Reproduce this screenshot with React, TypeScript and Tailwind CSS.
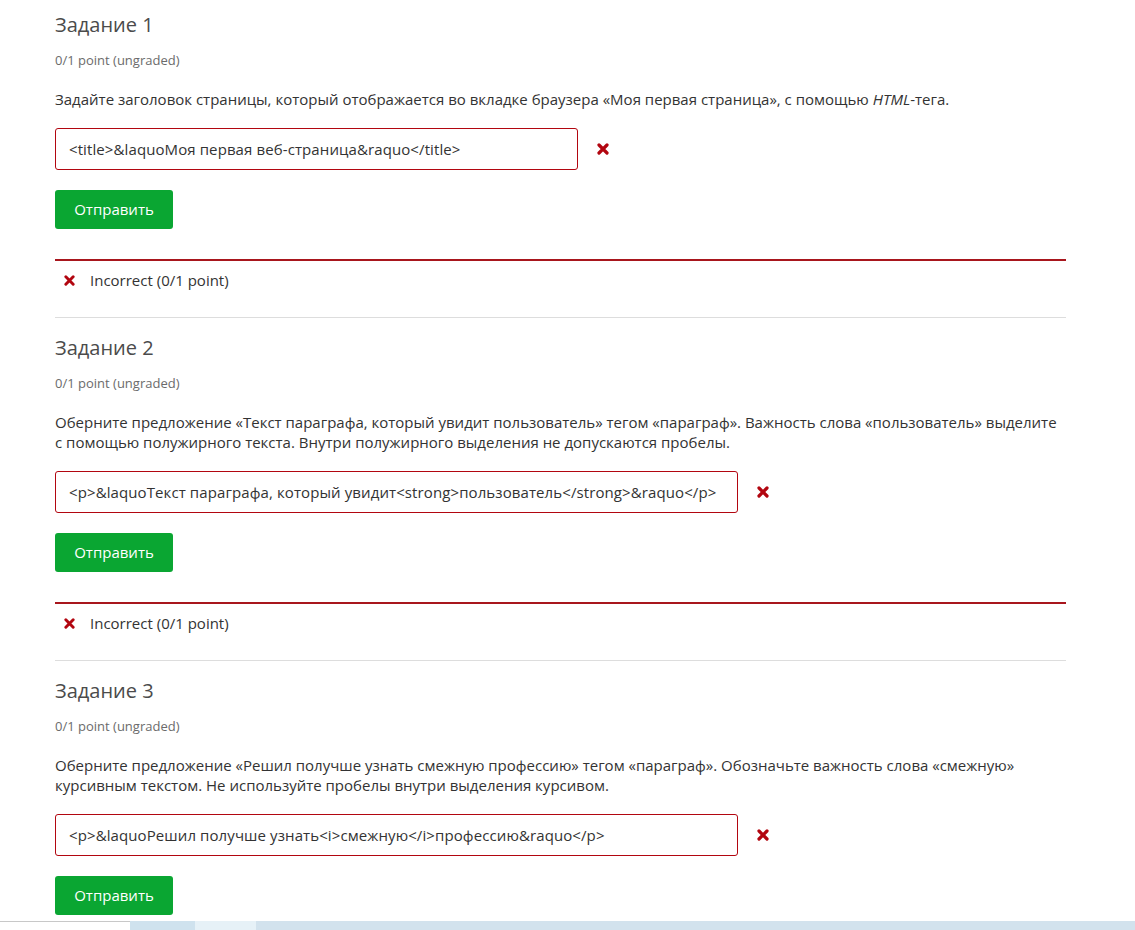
type Task = {
    title: string;
    text: React.ReactNode;
    answer: string;
    inputWidth: string;
};

const tasks: Task[] = [
    {
        title: 'Задание 1',
        text: (
            <>
                Задайте заголовок страницы, который отображается во вкладке браузера «Моя первая страница», с помощью <i>HTML</i>-тега.
            </>
        ),
        answer: '<title>&laquoМоя первая веб-страница&raquo</title>',
        inputWidth: 'w-[523px]',
    },
    {
        title: 'Задание 2',
        text: (
            <>
                Оберните предложение «Текст параграфа, который увидит пользователь» тегом «параграф». Важность слова «пользователь» выделите с помощью полужирного текста. Внутри полужирного выделения не допускаются пробелы.
            </>
        ),
        answer: '<p>&laquoТекст параграфа, который увидит<strong>пользователь</strong>&raquo</p>',
        inputWidth: 'w-[683px]',
    },
    {
        title: 'Задание 3',
        text: (
            <>
                Оберните предложение «Решил получше узнать смежную профессию» тегом «параграф». Обозначьте важность слова «смежную» курсивным текстом. Не используйте пробелы внутри выделения курсивом.
            </>
        ),
        answer: '<p>&laquoРешил получше узнать<i>смежную</i>профессию&raquo</p>',
        inputWidth: 'w-[683px]',
    },
];

// bold "times" mark used for wrong answers
function Cross({ className }: { className?: string }) {
    return (
        <svg viewBox="0 0 12 12" className={className} fill="none">
            <path d="M2 2L10 10M10 2L2 10" stroke="currentColor" strokeWidth="3.2" strokeLinecap="round" />
        </svg>
    );
}

function TaskBlock({ task, last }: { task: Task; last: boolean }) {
    return (
        <div>
            <h3 className="text-[20px] leading-[28px] text-[#4b4b4b] font-normal">{task.title}</h3>
            <div className="mt-[12px] text-[13px] leading-[18px] text-[#6b6b6b]">0/1 point (ungraded)</div>
            <p className="mt-[20px] text-[15px] leading-[20px] text-[#333]">{task.text}</p>
            <div className="mt-[19px] flex items-center gap-[19px]">
                <div
                    className={`${task.inputWidth} h-[42px] border border-[#b20610] rounded-[3px] px-[13px] flex items-center whitespace-nowrap overflow-hidden text-[15px] tracking-[0.1px] text-[#333]`}
                >
                    {task.answer}
                </div>
                <Cross className="w-[12px] h-[12px] text-[#b20610]" />
            </div>
            <button className="mt-[20px] w-[118px] h-[39px] rounded-[3px] bg-[#0aa632] text-white text-[15px]">
                Отправить
            </button>
            {!last && (
                <>
                    <div className="mt-[30px] h-[2px] bg-[#a8161d]" />
                    <div className="mt-[9px] flex items-center text-[15px] leading-[20px] text-[#333]">
                        <Cross className="ml-[9px] w-[11px] h-[11px] text-[#b20610]" />
                        <span className="ml-[15px]">Incorrect (0/1 point)</span>
                    </div>
                    <div className="mt-[27px] h-px bg-[#dddddd]" />
                </>
            )}
        </div>
    );
}

export default function App() {
    return (
        <div className="bg-white min-h-[930px] flex flex-col" style={{ fontFamily: '"Open Sans", "Noto Sans", sans-serif' }}>
            <div className="pl-[55px] pt-[11px] w-[1066px] flex flex-col gap-[16px]">
                {tasks.map((t, i) => (
                    <TaskBlock key={t.title} task={t} last={i === tasks.length - 1} />
                ))}
            </div>
            <div className="mt-[6px] flex h-[9px]">
                <div className="w-[130px] border-t border-[#c8c8c8] bg-white" />
                <div className="w-[65px] bg-[#cfe2ee]" />
                <div className="w-[61px] bg-[#e6f1f7]" />
                <div className="flex-1 bg-[#d2e2ed]" />
            </div>
        </div>
    );
}
